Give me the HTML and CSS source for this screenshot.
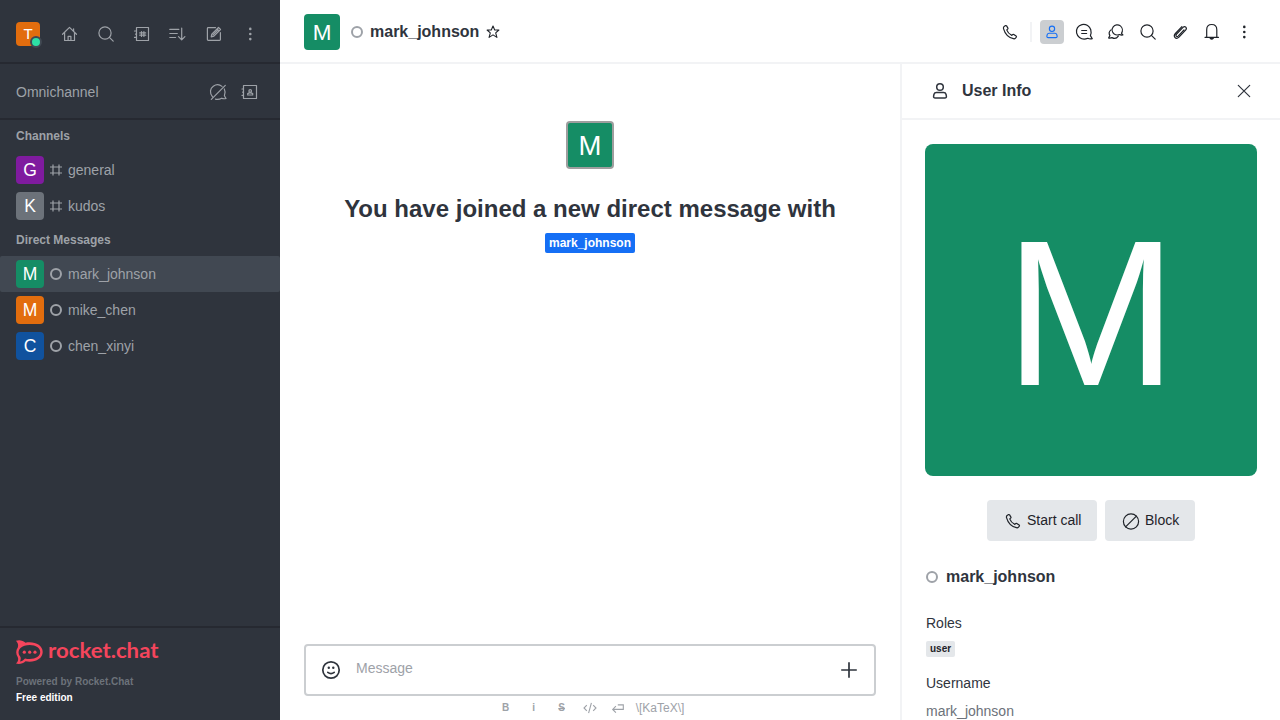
FILE: index.html
```html
<!DOCTYPE html>
<html lang="en">
<head>
<meta charset="utf-8">
<title>mark_johnson</title>
<link rel="stylesheet" href="styles.css">
</head>
<body>
<svg class="defs" aria-hidden="true">
  <symbol id="home" viewBox="0 0 20 20"><path d="M2.5 10.3 9.5 3.4l7 6.9M4.6 8.4v8.1h9.9V8.4M8.1 16.5v-4.2h2.8v4.2M13.6 7.2V4.8"/></symbol>
  <symbol id="search" viewBox="0 0 20 20"><circle cx="9" cy="9" r="6.1"/><path d="m13.4 13.4 3.8 3.8"/></symbol>
  <symbol id="directory" viewBox="0 0 20 20"><path d="M4.500 3.500h12v13h-12zM2.500 7h2M3.500 10.200h1M2.500 13.400h2M9.500 7.500v5M11.900 7.500v5M7.700 8.900h6M7.700 11.200h6"/></symbol>
  <symbol id="contacts" viewBox="0 0 20 20"><path d="M3.500 3.500h13v13h-13zM2 7h1.500M2.600 10.200h1M2 13.400h1.500M7.700 13v-1.400l1.500-.7h2l1.500.7V13z"/><circle cx="10.200" cy="8.900" r="1.300"/></symbol>
  <symbol id="sort" viewBox="0 0 20 20"><path d="M1.800 5.400h9M1.800 9.500h7.500M1.800 13.500h5.800M13.700 4v11.600M10.500 12.600l3.200 3.200 3.200-3.200"/></symbol>
  <symbol id="compose" viewBox="0 0 20 20"><path d="M11.500 3.600H4.200q-.8 0-.8.8v11.200q0 .8.8.8h11.400q.8 0 .8-.8V8.700M7.200 12.800l.6-2.700 6.700-6.600 2 2-6.600 6.700zM9 10.900l5-5M13.100 4.800l2 2"/></symbol>
  <symbol id="kebab" viewBox="0 0 20 20"><g fill="currentColor" stroke="none"><circle cx="10.3" cy="4.9" r="1.3"/><circle cx="10.3" cy="10" r="1.3"/><circle cx="10.3" cy="15.1" r="1.3"/></g></symbol>
  <symbol id="omni-off" viewBox="0 0 20 20"><path d="M3.300 17.300 17.300 3.300M4.400 14.700C1.400 11 2 6.500 5.300 4.200c2.800-1.900 6.300-1.700 8.700.2M16.300 7c1.300 2.500 1.100 4.700.1 6.800l1.600 2.700q-2.600.6-4.200-.3-3.200 1.700-6.400.9"/></symbol>
  <symbol id="hash" viewBox="0 0 12 12"><path d="M3 .5v11M9 .5v11M0 3h12M0 9h12"/></symbol>
  <symbol id="phone" viewBox="0 0 20 20"><path d="M4.100 4.500 5.600 3.600q.6-.3 1 .3l1.300 2.200q.3.6-.2 1L6.700 7.900c.8 2.200 2.700 4.400 5.100 5.500l1-.9q.5-.4 1-.1l2.300 1.600q.6.5.2 1.100l-.8 1q-.8.9-2.100.6C8.700 15.600 4.900 11.500 3.500 6.600Q3.200 5.200 4.100 4.500z"/></symbol>
  <symbol id="user" viewBox="0 0 20 20"><circle cx="10" cy="6" r="3.300"/><path d="M6.400 11.500h7.200q1.900 0 2.400 1.700l.4 1.900q.2 1.900-1.600 1.900H5.200q-1.800 0-1.600-1.900l.4-1.900q.5-1.700 2.400-1.700z"/></symbol>
  <symbol id="thread" viewBox="0 0 20 20"><path d="M16.400 13.600c1.600-4 .3-8.200-2.800-10.100C10 1.400 5.500 2.400 3.500 5.600c-2 3.200-1.100 7.500 2 9.900 2.500 1.900 5.600 2 8.300.8q2 1 4.500.4z"/><path d="M7.700 8.500h4.900M7.700 11.500h4.900"/></symbol>
  <symbol id="discussion" viewBox="0 0 20 20"><path d="M15.500 11.300c1.500-2.500 1-5.700-1.100-7.400-2.300-1.800-5.500-1.300-7.200 1s-1.200 5.400 1 7.100c1.700 1.200 3.600 1.200 5.300.5q1.600.8 3.400.4z"/><path d="M5 7.900c-1.800 1.400-2.200 3.800-1.100 5.700L2.600 16q1.900.5 3.400-.4c2.200 1.200 4.800.7 6.300-1.500"/></symbol>
  <symbol id="clip" viewBox="0 0 20 20"><path d="m14 7.900-5.900 6.200q-1 .9-1.800.1t.1-1.900l6.600-6.900q1.500-1.500 2.800-.2t-.2 3l-6.600 6.900q-2.300 2.100-4 .4-1.600-1.700.4-4l6.500-6.900"/></symbol>
  <symbol id="bell" viewBox="0 0 20 20"><path d="M3 15.300h13.500M4.700 15.300V7.700c0-3.100 2-5.200 5-5.200s5.100 2.100 5.100 5.200v7.600M8.200 16.400q1.500 1.700 3.100 0z"/></symbol>
  <symbol id="star" viewBox="0 0 14 14"><path d="m7 1 1.700 4h4.200L9.700 7.900l1.200 4.500L7 9.900l-3.900 2.500 1.200-4.500L1.100 5h4.200z"/></symbol>
  <symbol id="close" viewBox="0 0 20 20"><path d="m4.300 4.300 11.400 11.400M15.700 4.300 4.300 15.700"/></symbol>
  <symbol id="block" viewBox="0 0 20 20"><circle cx="10" cy="10.500" r="7.600"/><path d="M15.400 5.100 4.600 15.900"/></symbol>
  <symbol id="smile" viewBox="0 0 20 20"><circle cx="10" cy="10" r="8.200"/><path d="M6.800 12.300q3.200 2.500 6.400 0"/><g fill="currentColor" stroke="none"><circle cx="7.800" cy="7.800" r="1.200"/><circle cx="12.300" cy="7.800" r="1.200"/></g></symbol>
  <symbol id="plus" viewBox="0 0 20 20"><path d="M10 2.200v15.600M2.200 10h15.600"/></symbol>
  <symbol id="code" viewBox="0 0 14 14"><path d="M3.800 4.100 1 7l2.800 2.900M10.200 4.100 13 7l-2.800 2.900M8.400 1.800 5.600 12.200"/></symbol>
  <symbol id="enter" viewBox="0 0 14 14"><path d="M6.800 3.900h5.500v4.500H2M4.900 5.200 1.700 8.400l3.200 3.200"/></symbol>
</svg>

<div class="app">
  <nav class="sidebar">
    <header class="side-head">
      <div class="me">
        <svg class="avatar s24 orange" viewBox="0 0 200 200"><text x="100" y="100" dy=".36em">T</text></svg>
        <i class="online"></i>
      </div>
      <div class="side-tools">
        <svg class="icon"><use href="#home"/></svg>
        <svg class="icon"><use href="#search"/></svg>
        <svg class="icon"><use href="#directory"/></svg>
        <svg class="icon"><use href="#sort"/></svg>
        <svg class="icon"><use href="#compose"/></svg>
        <svg class="icon"><use href="#kebab"/></svg>
      </div>
    </header>
    <section class="omni">
      <span>Omnichannel</span>
      <svg class="icon"><use href="#omni-off"/></svg>
      <svg class="icon"><use href="#contacts"/></svg>
    </section>
    <div class="rooms">
      <h3 class="group">Channels</h3>
      <a class="room"><svg class="avatar s28 purple" viewBox="0 0 200 200"><text x="100" y="100" dy=".36em">G</text></svg><svg class="hash"><use href="#hash"/></svg>general</a>
      <a class="room"><svg class="avatar s28 gray" viewBox="0 0 200 200"><text x="100" y="100" dy=".36em">K</text></svg><svg class="hash"><use href="#hash"/></svg>kudos</a>
      <h3 class="group">Direct Messages</h3>
      <a class="room selected"><svg class="avatar s28 green" viewBox="0 0 200 200"><text x="100" y="100" dy=".36em">M</text></svg><i class="status"></i>mark_johnson</a>
      <a class="room"><svg class="avatar s28 orange" viewBox="0 0 200 200"><text x="100" y="100" dy=".36em">M</text></svg><i class="status"></i>mike_chen</a>
      <a class="room"><svg class="avatar s28 blue" viewBox="0 0 200 200"><text x="100" y="100" dy=".36em">C</text></svg><i class="status"></i>chen_xinyi</a>
    </div>
    <footer class="side-foot">
      <svg class="brand" viewBox="0 0 144 24">
        <path fill-rule="evenodd" d="M0 .8C3-.5 7 .2 9.500 2.800 18 1 26.700 5 26.700 12S18 23 9.500 21.200C7 23.700 3 24.500 0 23.500c2.300-2 2.600-4.500 1.800-6.200-2.100-3.300-2.100-6.800 0-9.800C2.600 5 2 3 0 .8zM13.700 5C20 5 24.200 8 24.200 12s-4.200 7-10.500 7q-2.700 0-4.700-.5c-1.800 2-3.400 2.800-5 3 1-2 1-4 .2-5C2 14 2 10.500 4.500 8 6.500 6 10 5 13.700 5z"/>
        <circle cx="8.300" cy="12.200" r="1.600"/><circle cx="13.700" cy="12.200" r="1.600"/><circle cx="19" cy="12.200" r="1.600"/>
        <text x="32" y="17.800" textLength="110.500" lengthAdjust="spacingAndGlyphs">rocket.chat</text>
      </svg>
      <div class="powered">Powered by Rocket.Chat</div>
      <div class="edition">Free edition</div>
    </footer>
  </nav>

  <div class="content">
    <header class="room-head">
      <svg class="avatar s36 green" viewBox="0 0 200 200"><text x="100" y="100" dy=".36em">M</text></svg>
      <i class="status"></i>
      <h1>mark_johnson</h1>
      <svg class="star"><use href="#star"/></svg>
      <div class="actions">
        <span class="action"><svg class="icon"><use href="#phone"/></svg></span>
        <span class="divider"></span>
        <span class="action active"><svg class="icon small"><use href="#user"/></svg></span>
        <span class="action"><svg class="icon"><use href="#thread"/></svg></span>
        <span class="action"><svg class="icon"><use href="#discussion"/></svg></span>
        <span class="action"><svg class="icon"><use href="#search"/></svg></span>
        <span class="action"><svg class="icon"><use href="#clip"/></svg></span>
        <span class="action"><svg class="icon"><use href="#bell"/></svg></span>
        <span class="action"><svg class="icon"><use href="#kebab"/></svg></span>
      </div>
    </header>
    <div class="columns">
      <main class="chat">
        <div class="intro">
          <div class="frame"><svg class="avatar s44 green" viewBox="0 0 200 200"><text x="100" y="100" dy=".36em">M</text></svg></div>
          <h2>You have joined a new direct message with</h2>
          <span class="mention">mark_johnson</span>
        </div>
        <div class="composer">
          <svg class="icon emoji"><use href="#smile"/></svg>
          <span class="placeholder">Message</span>
          <svg class="icon add"><use href="#plus"/></svg>
        </div>
        <div class="formatting">
          <b>B</b><b>i</b><b><s>S</s></b>
          <svg><use href="#code"/></svg>
          <svg><use href="#enter"/></svg>
          <span>\[KaTeX\]</span>
        </div>
      </main>
      <aside class="info">
        <header class="info-head">
          <svg class="icon title-icon"><use href="#user"/></svg>
          <h2>User Info</h2>
          <svg class="icon"><use href="#close"/></svg>
        </header>
        <div class="info-body">
          <svg class="avatar s332 green" viewBox="0 0 200 200"><text x="100" y="100" dy=".36em">M</text></svg>
          <div class="buttons">
            <button class="call"><svg class="icon"><use href="#phone"/></svg><span>Start call</span></button>
            <button class="block"><svg class="icon"><use href="#block"/></svg><span>Block</span></button>
          </div>
          <div class="name"><i class="status"></i>mark_johnson</div>
          <div class="label">Roles</div>
          <div class="role">user</div>
          <div class="label">Username</div>
          <div class="value">mark_johnson</div>
        </div>
      </aside>
    </div>
  </div>
</div>
</body>
</html>
```
FILE: styles.css
```css
* { box-sizing: border-box; }
body {
  margin: 0;
  font: 14px/20px "Liberation Sans", Arial, sans-serif;
  color: #2f343d;
  background: #fff;
}
h1, h2, h3 { margin: 0; }
.defs { display: none; }
.app { display: flex; width: 1280px; height: 720px; overflow: hidden; }

.icon {
  width: 20px; height: 20px; flex: none;
  fill: none; stroke: currentColor; stroke-width: 1.2;
  stroke-linecap: round; stroke-linejoin: round;
}
.icon.small { width: 16px; height: 16px; stroke-width: 1.4; }
.title-icon { stroke-width: 1.5; }

.avatar { display: block; flex: none; border-radius: 4px; }
.avatar text {
  fill: #fff; font-size: 125px; text-anchor: middle;
  font-family: "Liberation Sans", Arial, sans-serif;
}
.s24 { width: 24px; height: 24px; }
.s28 { width: 28px; height: 28px; }
.s36 { width: 36px; height: 36px; }
.s44 { width: 44px; height: 44px; border-radius: 2px; }
.s332 { width: 332px; height: 332px; border-radius: 8px; }
.orange { background: #e26d0e; }
.purple { background: #7f1b9f; }
.gray { background: #6c727a; }
.green { background: #158d65; }
.blue { background: #10529e; }

.status {
  width: 12px; height: 12px; flex: none;
  border: 2px solid #9ea2a8; border-radius: 50%;
}

.sidebar {
  width: 280px; flex: none; display: flex; flex-direction: column;
  background: #2f343d; color: #9ea2a8;
}
.side-head {
  display: flex; align-items: center; height: 64px;
  padding: 4px 20px 0 16px; border-bottom: 2px solid #262931;
}
.me { position: relative; margin-top: 2px; }
.online {
  position: absolute; left: 14px; top: 14px; width: 12px; height: 12px;
  border: 2px solid #414852; border-radius: 50%; background: #2de0a5;
}
.side-tools { display: flex; gap: 16px; margin: 2px 0 0 20px; }
.omni {
  display: flex; align-items: center; gap: 12px; height: 56px;
  padding: 2px 20px 0 16px; border-bottom: 2px solid #262931;
}
.omni span { flex: 1; }
.rooms { flex: 1; }
.group { height: 32px; padding-left: 16px; font-size: 12px; line-height: 32px; }
.room { display: flex; align-items: center; height: 36px; padding-left: 16px; gap: 6px; }
.selected { background: #414852; border-radius: 2px; }
.hash { width: 12px; height: 12px; fill: none; stroke: #9ea2a8; stroke-width: 1.2; }
.side-foot {
  height: 94px; padding: 12px 16px 0; border-top: 2px solid #262931;
  font-size: 10px; font-weight: 700; line-height: 16px;
}
.brand { display: block; width: 144px; height: 24px; margin-bottom: 10px; overflow: visible; fill: #f5455c; }
.brand text { font: 700 21.5px/1 Lato, sans-serif; }
.powered { color: #6c727a; }
.edition { color: #fff; }

.content { flex: 1; min-width: 0; display: flex; flex-direction: column; }
.room-head {
  display: flex; align-items: center; height: 64px;
  padding: 2px 24px 0; border-bottom: 2px solid #f2f3f5;
}
.room-head .status { margin: 0 7px 0 11px; }
.room-head h1 { font-size: 16px; line-height: 24px; }
.star { width: 14px; height: 14px; margin-left: 7px; fill: none; stroke: #1f2329; stroke-width: 1.1; stroke-linejoin: round; }
.actions { display: flex; align-items: center; gap: 8px; margin-left: auto; color: #1f2329; }
.action { display: flex; align-items: center; justify-content: center; width: 24px; height: 24px; border-radius: 4px; }
.active { background: #cbced1; color: #156ff5; }
.divider { width: 2px; height: 20px; background: #f2f3f5; }

.columns { flex: 1; display: flex; min-height: 0; }
.chat { width: 620px; padding: 0 24px; display: flex; flex-direction: column; }
.intro { flex: 1; display: flex; flex-direction: column; align-items: center; padding-top: 57px; }
.frame { padding: 2px; border-radius: 4px; background: #9e9e9e; }
.intro h2 { margin-top: 24px; font-size: 24px; line-height: 32px; white-space: nowrap; }
.mention {
  margin-top: 8px; padding: 0 4px; border-radius: 2px; color: #fff;
  background: #156ff5; font-size: 12px; font-weight: 700;
}
.composer {
  display: flex; align-items: center; height: 52px; padding: 0 15px;
  border: 2px solid #cbced1; border-radius: 4px;
}
.emoji { stroke-width: 1.7; }
.add { stroke-width: 1.7; stroke-linecap: butt; }
.placeholder { flex: 1; margin: -4px 0 0 15px; color: #9ea2a8; }
.formatting {
  display: flex; align-items: center; justify-content: center; gap: 14px;
  height: 24px; padding-left: 3px; color: #9ea2a8; font-size: 10px;
}
.formatting b { width: 14px; text-align: center; }
.formatting svg { width: 14px; height: 14px; fill: none; stroke: #9ea2a8; stroke-width: 1.1; }
.formatting span { font-size: 12px; margin-left: -3px; }

.info { flex: 1; border-left: 2px solid #f2f3f5; }
.info-head {
  display: flex; align-items: center; height: 56px;
  padding: 0 26px 0 28px; border-bottom: 2px solid #f2f3f5;
}
.info-head h2 { flex: 1; margin-left: 12px; font-size: 16px; line-height: 24px; }
.info-body { padding: 24px 23px 0 24px; }
.info-body .avatar { margin-left: -1px; }
.buttons { display: flex; justify-content: center; gap: 8px; margin: 24px 0 24px -1px; }
.buttons button {
  display: flex; align-items: center; gap: 4px; height: 41px; padding: 0 0 0 16px;
  border: 0; border-radius: 4px; background: #e4e7ea; color: #1f2329;
  font: inherit; line-height: 20px; white-space: nowrap;
}
.buttons span { padding-bottom: 2px; }
.call { width: 110px; }
.block { width: 90px; }
.name { display: flex; align-items: center; gap: 8px; font-size: 16px; font-weight: 700; line-height: 24px; }
.label { margin-top: 16px; }
.name + .label { margin-top: 24px; }
.role {
  width: fit-content; height: 16px; margin-top: 8px; padding: 0 4px;
  border-radius: 2px; background: #e4e7ea; color: #1f2329;
  font-size: 10px; font-weight: 700; line-height: 15px;
}
.value { margin-top: 8px; color: #6c727a; }
```
